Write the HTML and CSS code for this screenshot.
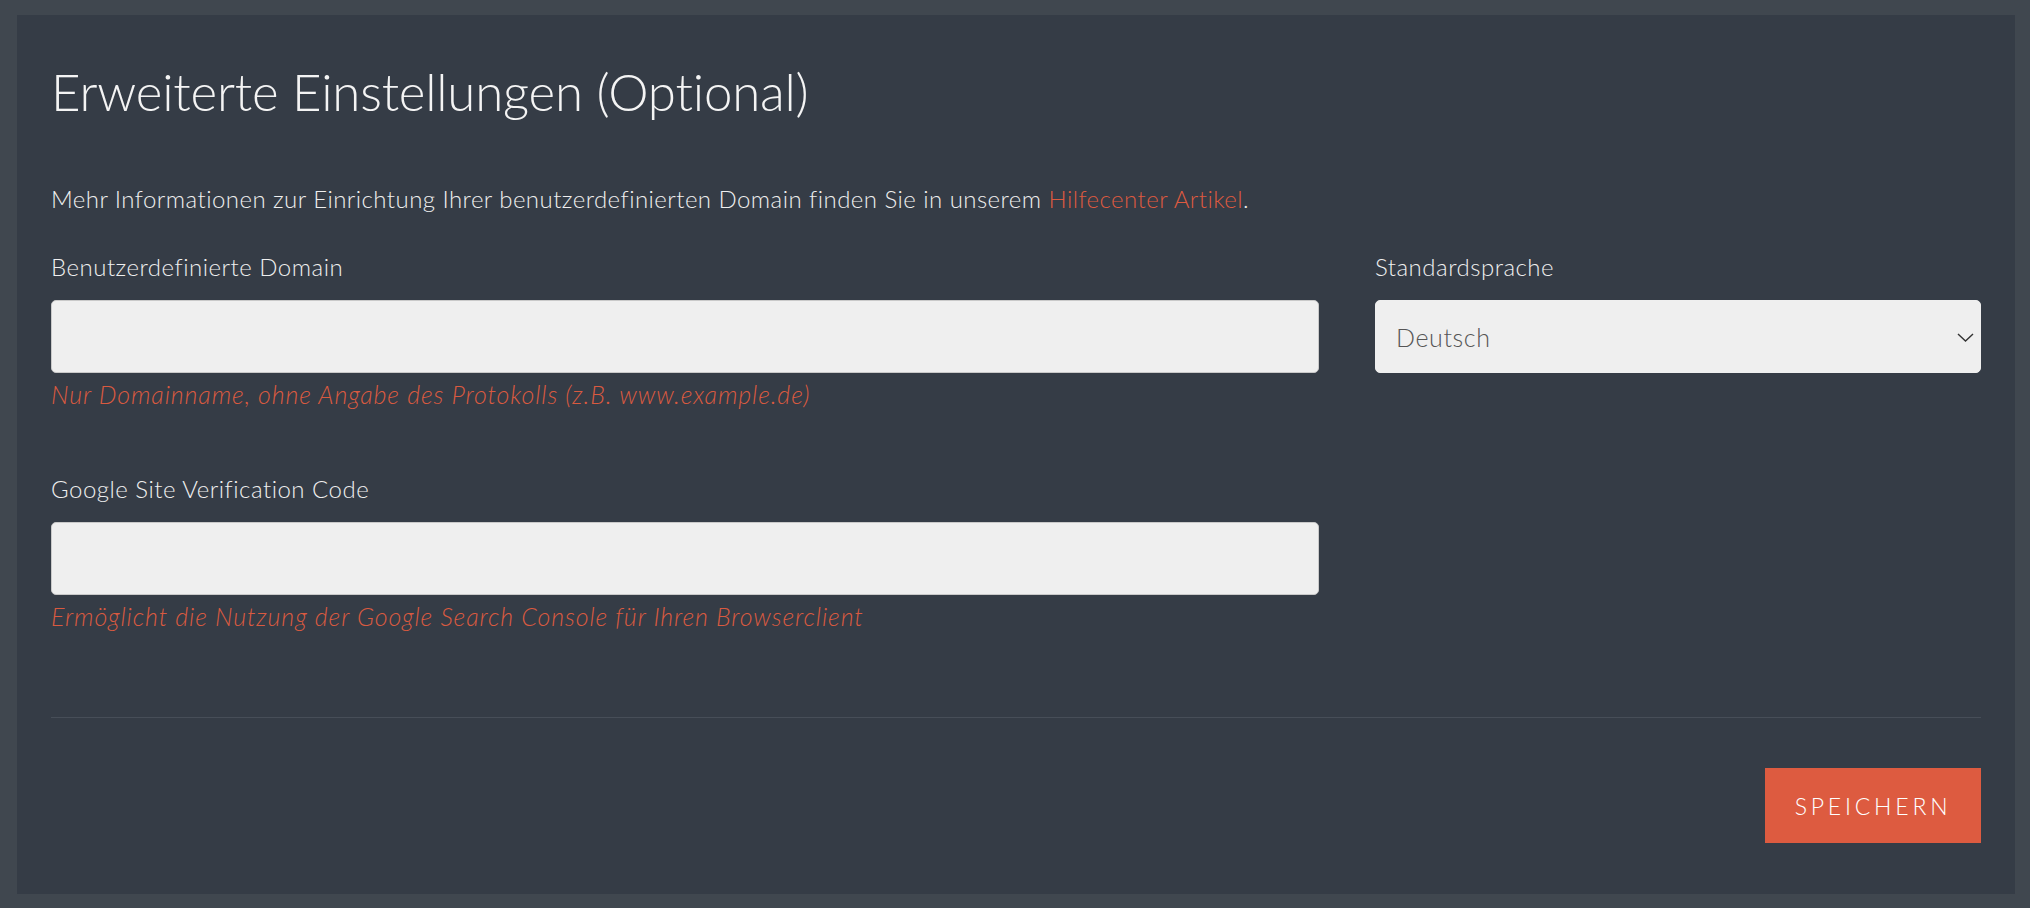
FILE: index.html
```html
<!DOCTYPE html>
<html lang="de">
<head>
<meta charset="utf-8">
<title>Erweiterte Einstellungen</title>
<link rel="stylesheet" href="styles.css">
</head>
<body>
<main class="panel">
  <h1 class="title">Erweiterte Einstellungen (Optional)</h1>
  <p class="intro">Mehr Informationen zur Einrichtung Ihrer benutzerdefinierten Domain finden Sie in unserem <a class="link" href="#">Hilfecenter Artikel</a>.</p>
  <div class="fields">
    <div class="field">
      <label class="label" for="domain">Benutzerdefinierte Domain</label>
      <input class="input" id="domain" type="text">
      <div class="help">Nur Domainname, ohne Angabe des Protokolls (z.B. www.example.de)</div>
    </div>
    <div class="field">
      <label class="label" for="lang">Standardsprache</label>
      <div class="select-wrap">
        <select class="select" id="lang">
          <option>Deutsch</option>
          <option>English</option>
        </select>
        <svg class="chevron" viewBox="0 0 17 9" width="17" height="9"><path d="M1 1l7.5 7 7.5-7" fill="none" stroke="#333" stroke-width="1.4"/></svg>
      </div>
    </div>
    <div class="field field-gap">
      <label class="label" for="gsv">Google Site Verification Code</label>
      <input class="input" id="gsv" type="text">
      <div class="help">Ermöglicht die Nutzung der Google Search Console für Ihren Browserclient</div>
    </div>
  </div>
  <hr class="divider">
  <div class="actions">
    <button class="btn" type="button">Speichern</button>
  </div>
</main>
</body>
</html>
```
FILE: styles.css
```css
html, body {
  margin: 0;
  padding: 0;
}
body {
  background: #40474f;
  font-family: "Lato", "Open Sans", sans-serif;
  font-weight: 300;
  color: #efefef;
  padding: 15px 15px 13px 17px;
}
.panel {
  background: #353c46;
  padding: 48px 34px 51px 34px;
}
.title {
  margin: 0;
  font-size: 51px;
  line-height: 57px;
  letter-spacing: -0.2px;
  font-weight: 300;
  color: #f4f4f4;
}
.intro {
  margin: 63px 0 0 0;
  font-size: 24px;
  line-height: 32px;
  letter-spacing: 0.45px;
  color: #efefef;
}
.link {
  color: #dd5a40;
  text-decoration: none;
}
.fields {
  margin-top: 36px;
  display: grid;
  grid-template-columns: calc((100% + 56px) * 2 / 3 - 56px) 1fr;
  column-gap: 56px;
}
.field {
  display: flex;
  flex-direction: column;
}
.field-gap {
  margin-top: 63px;
}
.label {
  font-size: 24px;
  line-height: 32px;
  letter-spacing: 0.5px;
  color: #efefef;
  margin-bottom: 17px;
}
.input,
.select {
  box-sizing: border-box;
  height: 73px;
  width: 100%;
  margin: 0;
  background: #efefef;
  border: 1px solid #c9c9c9;
  border-radius: 5px;
  font-family: "Lato", "Open Sans", sans-serif;
  font-weight: 300;
  font-size: 25px;
  letter-spacing: 0.6px;
  color: #555;
  padding: 0 20px;
  outline: none;
}
.select-wrap {
  position: relative;
}
.select {
  appearance: none;
  -webkit-appearance: none;
  border-color: #efefef;
}
.chevron {
  position: absolute;
  right: 7px;
  top: 33px;
  pointer-events: none;
}
.help {
  margin-top: 5px;
  font-size: 25px;
  line-height: 32px;
  letter-spacing: 0.88px;
  font-style: italic;
  color: #d95a40;
}
.divider {
  margin: 85px 0 0 0;
  border: 0;
  height: 1px;
  background: #474e58;
}
.actions {
  display: flex;
  justify-content: flex-end;
  margin-top: 50px;
}
.btn {
  width: 216px;
  height: 75px;
  background: #dd5b40;
  border: 0;
  border-radius: 0;
  color: #ffffff;
  font-family: "Lato", "Open Sans", sans-serif;
  font-weight: 300;
  font-size: 23px;
  letter-spacing: 3.8px;
  text-transform: uppercase;
  padding: 0;
  cursor: pointer;
}
```
